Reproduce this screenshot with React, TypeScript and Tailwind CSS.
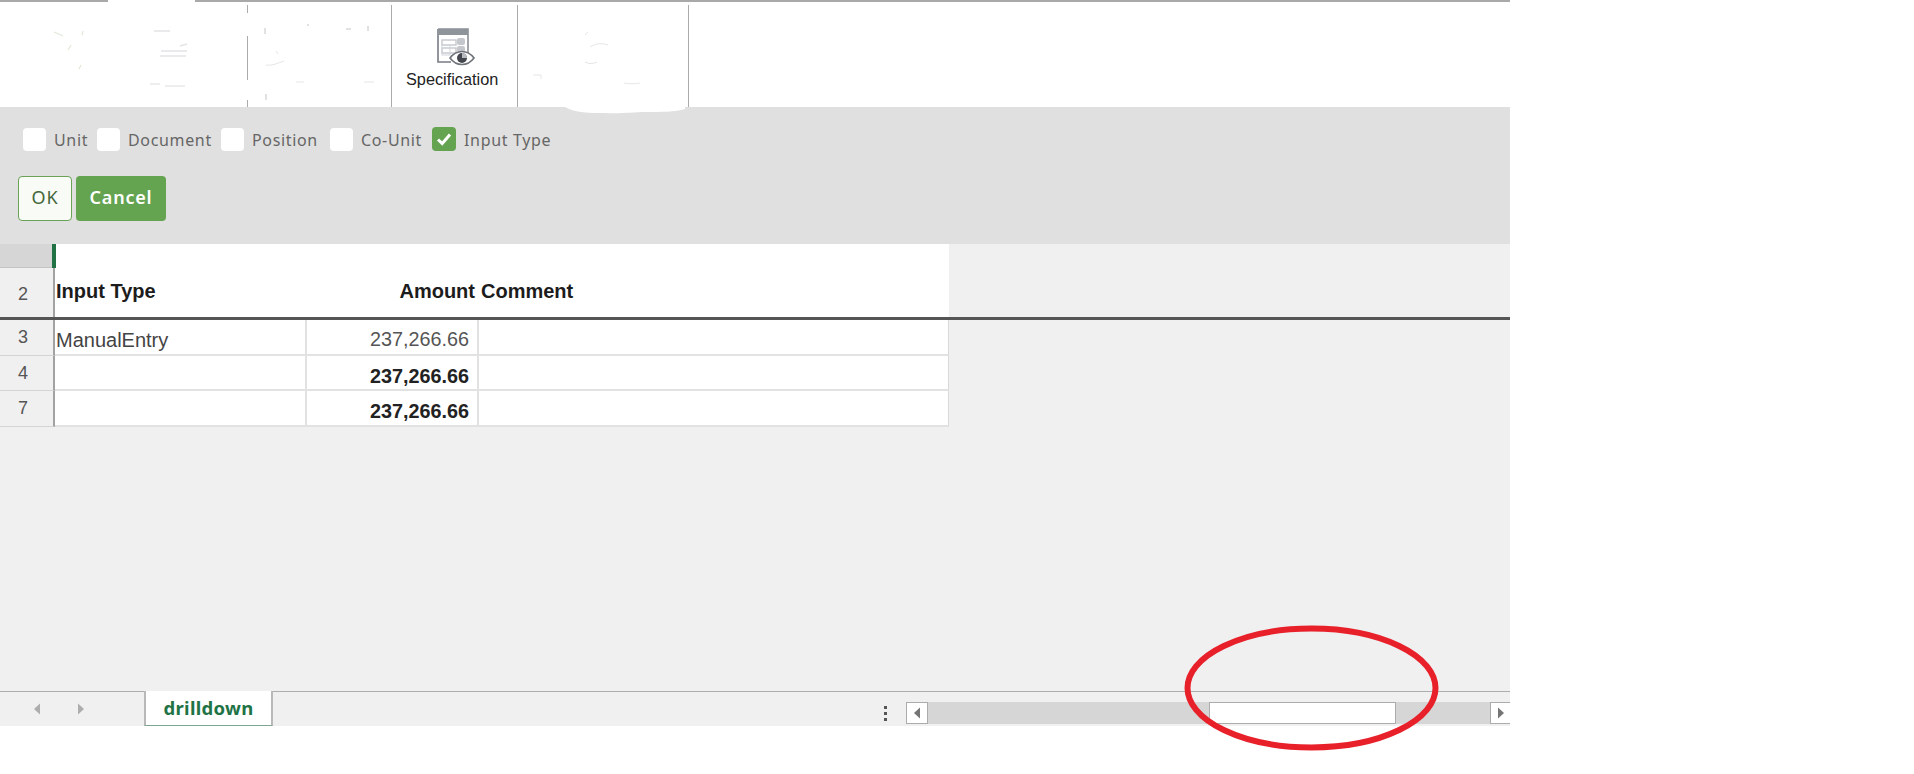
const sans = "font-['Noto_Sans','Open_Sans',sans-serif]";
const arial = "font-['Liberation_Sans',Arial,sans-serif]";

function TopLine() {
  return (
    <div className="flex h-[2px] w-full shrink-0">
      <div className="h-full w-[108px] bg-[#a9a9a9]" />
      <div className="h-full w-[87px] bg-white" />
      <div className="h-full flex-1 bg-[#a9a9a9]" />
    </div>
  );
}

function Sep({ w, gap }: { w: string; gap?: boolean }) {
  return (
    <div className={`${w} flex h-full shrink-0 flex-col items-end`}>
      {gap ? (
        <>
          <div className="h-[8px] w-px bg-[#ababab]" />
          <div className="h-[23px]" />
          <div className="h-[44px] w-px bg-[#ababab]" />
          <div className="h-[20px]" />
          <div className="h-[7px] w-px bg-[#ababab]" />
        </>
      ) : (
        <div className="h-full w-px bg-[#ababab]" />
      )}
    </div>
  );
}

function SpecIcon() {
  return (
    <svg width="40" height="39" viewBox="0 0 40 39" className="absolute left-[44px] top-[23px]">
      <path d="M2 1h30v25" fill="#fff" stroke="#8b8f96" strokeWidth="1.6" />
      <path d="M2 1v33h13" fill="none" stroke="#777c84" strokeWidth="1.6" />
      <rect x="2" y="1" width="30" height="6" fill="#8f949b" />
      <rect x="6" y="12" width="14" height="5" fill="none" stroke="#c3c7cc" strokeWidth="1.4" />
      <rect x="6" y="20" width="14" height="5" fill="none" stroke="#c3c7cc" strokeWidth="1.4" />
      <rect x="6" y="17" width="8" height="10" fill="none" stroke="#d2d5d9" strokeWidth="1" />
      <rect x="21" y="10" width="8" height="7" rx="2" fill="#c4c7cb" />
      <rect x="21" y="18" width="8" height="6" rx="2" fill="#c4c7cb" />
      <path d="M14 30c3-4 7-6.500 12-6.500s9 2.500 12 6.500c-3 4-7 6.500-12 6.500s-9-2.500-12-6.500z" fill="#fff" stroke="#6d7178" strokeWidth="1.6" />
      <circle cx="26" cy="30" r="5" fill="#43474d" />
      <path d="M26 25a5 5 0 0 1 5 5h-5z" fill="#b8bbc0" />
    </svg>
  );
}

function Ribbon() {
  return (
    <div className="relative flex h-[102px] w-full shrink-0 bg-white pt-0">
      <Sep w="w-[248px]" gap />
      <Sep w="w-[144px]" />
      <div className="relative h-full w-[126px] shrink-0 border-r border-[#ababab]">
        <SpecIcon />
        <div className={`${arial} absolute left-[14px] top-[65px] whitespace-nowrap text-[16.3px] leading-[19px] text-[#222]`}>
          Specification
        </div>
      </div>
      <Sep w="w-[171px]" />
      <svg width="690" height="103" viewBox="0 0 690 103" className="pointer-events-none absolute left-0 top-0" fill="none">
        <path d="M54 27l9 4M83 26l-1 4M71 40l-3 5M81 60l-2 4" stroke="#dfe8d8" strokeWidth="1.2" />
        <path d="M154 26h16M161 46h26M160 51h26M180 41l7-2" stroke="#e4e4e6" strokeWidth="1.4" />
        <path d="M150 79h10M165 81h20" stroke="#dddddd" />
        <path d="M265 23v6M307 20h2M346 24h5M368 21v5M266 89v6" stroke="#c4c4c4" />
        <path d="M266 60c6 1 12-2 18-4M276 46l2 3M296 77h8M364 77h10" stroke="#e6e6e6" />
        <path d="M588 27l-3 3M590 42c6-4 12-4 18-2M585 57c4 2 8 2 12 0M533 70h8v4M624 78c6 1 10 1 16 0" stroke="#e6e6e6" />
      </svg>
    </div>
  );
}

function Check({ checked }: { checked?: boolean }) {
  return checked ? (
    <div className="flex h-[24px] w-[24px] shrink-0 items-center justify-center rounded-[4px] bg-[#64a34f]">
      <svg width="16" height="14" viewBox="0 0 16 14" fill="none">
        <path d="M2 7.500l4.200 4L14 2.500" stroke="#fff" strokeWidth="3" />
      </svg>
    </div>
  ) : (
    <div className="h-[23px] w-[23px] shrink-0 rounded-[4px] bg-white" />
  );
}

function Opt({ label, w, checked }: { label: string; w: string; checked?: boolean }) {
  return (
    <div className={`${w} flex shrink-0 items-center gap-[8px]`}>
      <Check checked={checked} />
      <span className={`${sans} translate-y-px whitespace-nowrap text-[16px] leading-[24px] tracking-[0.66px] text-[#666]`}>{label}</span>
    </div>
  );
}

function Panel() {
  return (
    <div className="flex h-[137px] w-full shrink-0 flex-col bg-[#e0e0e0] pl-[18px] pt-[20px]">
      <div className="flex h-[24px] pl-[5px]">
        <Opt label="Unit" w="w-[74px]" />
        <Opt label="Document" w="w-[124px]" />
        <Opt label="Position" w="w-[109px]" />
        <Opt label="Co-Unit" w="w-[102px]" checked={false} />
        <Opt label="Input Type" w="w-[125px]" checked />
      </div>
      <div className="mt-[25px] flex gap-[4px]">
        <div className={`${sans} flex h-[45px] w-[54px] items-center justify-center rounded-[4px] border border-[#6aa257] bg-[#f8fbf6] pb-[2px] text-[18px] tracking-[0.8px] text-[#44663a]`}>
          OK
        </div>
        <div className={`${sans} flex h-[45px] w-[90px] items-center justify-center rounded-[4px] bg-[#64a34f] pb-[2px] text-[18px] font-semibold tracking-[0.8px] text-white`}>
          Cancel
        </div>
      </div>
    </div>
  );
}

function Row({ n, h, first, amount, bold }: { n: string; h: string; first?: string; amount: string; bold?: boolean }) {
  return (
    <div className={`${h} flex shrink-0`}>
      <div className={`${arial} flex w-[55px] shrink-0 items-center justify-center border-b border-r-2 border-b-[#d4d4d4] border-r-[#a2a2a2] pr-[7px] text-[18px] text-[#555]`}>
        {n}
      </div>
      <div className="flex w-[894px] shrink-0 border-b-2 border-r border-b-[#e2e2e2] border-r-[#d9d9d9] bg-white">
        <div className={`${arial} flex w-[252px] shrink-0 items-center border-r-2 border-[#e2e2e2] pl-[1px] pt-[5px] text-[20px] text-[#444]`}>
          <span>{first}</span>
        </div>
        <div className={`${arial} flex w-[172px] shrink-0 items-center justify-end border-r-2 border-[#e2e2e2] pr-[8px] ${bold ? "pt-[8px] font-bold text-[#222]" : "pt-[5px] text-[#555]"} text-[19.8px]`}>
          {amount}
        </div>
        <div className="flex-1" />
      </div>
    </div>
  );
}

function Sheet() {
  return (
    <div className="flex min-h-0 flex-1 flex-col bg-[#f0f0f0]">
      <div className="flex h-[24px] shrink-0">
        <div className="h-full w-[52px] shrink-0 border-b border-[#c4c4c4] bg-[#d6d6d6]" />
        <div className="h-full w-[4px] shrink-0 bg-[#217346]" />
        <div className="h-full w-[893px] shrink-0 bg-white" />
      </div>
      <div className="flex h-[49px] shrink-0">
        <div className={`${arial} flex w-[55px] shrink-0 items-center justify-center border-r-2 border-[#a2a2a2] pr-[7px] pt-[4px] text-[18px] text-[#555]`}>
          2
        </div>
        <div className={`${arial} flex w-[894px] shrink-0 items-center bg-white pb-[3px] text-[20px] font-bold text-[#1c1c1c]`}>
          <div className="w-[252px] shrink-0 pl-[1px]">Input Type</div>
          <div className="w-[168px] shrink-0 text-right">Amount</div>
          <div className="pl-[6px]">Comment</div>
        </div>
      </div>
      <div className="h-[3px] w-full shrink-0 bg-[#555]" />
      <Row n="3" h="h-[36px]" first="ManualEntry" amount="237,266.66" />
      <Row n="4" h="h-[35px]" amount="237,266.66" bold />
      <Row n="7" h="h-[36px]" amount="237,266.66" bold />
      <div className="flex-1" />
    </div>
  );
}

function Tri({ dir, color, className }: { dir: "l" | "r"; color: string; className?: string }) {
  return (
    <svg width="8" height="12" viewBox="0 0 8 12" className={className}>
      <path d={dir === "l" ? "M7 0.500v11L1 6z" : "M1 0.500v11L7 6z"} fill={color} />
    </svg>
  );
}

function Footer() {
  return (
    <div className="flex h-[35px] w-full shrink-0 border-t border-[#adadad] bg-[#f0f0f0]">
      <div className="flex w-[144px] shrink-0 items-center pb-[1px] pl-[33px]">
        <Tri dir="l" color="#adadad" />
        <Tri dir="r" color="#adadad" className="ml-[36px]" />
      </div>
      <div className={`${sans} -mt-px flex h-[35px] w-[129px] shrink-0 items-center justify-center border-x-2 border-b border-x-[#b9b9b9] border-b-[#7da592] bg-white text-[18.500px] font-bold tracking-[0.3px] text-[#217346]`}>
        drilldown
      </div>
      <div className="flex h-[17px] w-[633px] shrink-0 items-end justify-end pr-[19px] pt-[14px]">
        <div className="flex flex-col gap-[3px] self-start">
          <div className="h-[3px] w-[3px] bg-[#555]" />
          <div className="h-[3px] w-[3px] bg-[#555]" />
          <div className="h-[3px] w-[3px] bg-[#555]" />
        </div>
      </div>
      <div className="mt-[10px] flex h-[22px] flex-1 bg-[#d6d6d6]">
        <div className="flex h-full w-[22px] shrink-0 items-center justify-center border border-[#acacac] bg-white">
          <Tri dir="l" color="#757575" />
        </div>
        <div className="w-[281px] shrink-0" />
        <div className="h-full w-[187px] shrink-0 border border-[#acacac] bg-white" />
        <div className="flex-1" />
        <div className="flex h-full w-[20px] shrink-0 items-center justify-center border-y border-l border-[#acacac] bg-white">
          <Tri dir="r" color="#757575" />
        </div>
      </div>
    </div>
  );
}

export default function App() {
  return (
    <div className="relative h-[774px] w-[1914px] overflow-hidden bg-white">
      <div className="flex h-[726px] w-[1510px] flex-col bg-white">
        <TopLine />
        <div className="h-[3px] shrink-0" />
        <Ribbon />
        <Panel />
        <Sheet />
        <Footer />
      </div>
      <svg width="120" height="8" viewBox="0 0 120 8" className="absolute left-[565px] top-[107px]">
        <path d="M0 0h120v2c-10 3-24 3-40 3-14 0-22 2-40 1C25 6 10 6 0 0z" fill="#fff" />
      </svg>
      <svg width="270" height="134" viewBox="0 0 270 134" className="absolute left-[1177px] top-[621px]" fill="none">
        <ellipse cx="134.500" cy="67" rx="124" ry="59.500" stroke="#e8202a" strokeWidth="6" />
      </svg>
    </div>
  );
}
